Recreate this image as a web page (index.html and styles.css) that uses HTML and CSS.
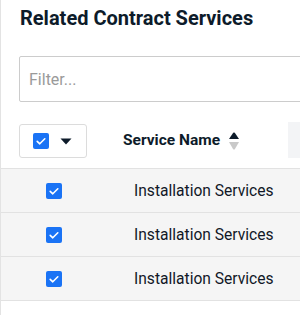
FILE: index.html
```html
<!DOCTYPE html>
<html>
<head>
<meta charset="utf-8">
<link rel="stylesheet" href="styles.css">
</head>
<body>
<div class="panel">
  <h2 class="title">Related Contract Services</h2>
  <div class="filter-wrap">
    <input class="filter" type="text" placeholder="Filter...">
  </div>
  <div class="table">
    <div class="row head">
      <div class="col-sel">
        <div class="sel-box">
          <span class="cb"><svg viewBox="0 0 16 16" width="16" height="16"><path d="M4.2 8.3l2.6 2.5 5-5" fill="none" stroke="#fff" stroke-width="1.6" stroke-linecap="round" stroke-linejoin="round"/></svg></span>
          <svg class="caret" viewBox="0 0 12 7" width="12" height="7"><path d="M0.5 0.5h11L6 6.5z" fill="#0d1b2a"/></svg>
        </div>
      </div>
      <div class="col-name head-name">
        <span>Service Name</span>
        <svg class="sort" viewBox="0 0 10 18" width="10" height="18"><path d="M4.2 0.8Q5 0 5.8 0.8L10 7H0z" fill="#0d1b2a"/><path d="M0 10h10L5.8 17.2Q5 18 4.2 17.2z" fill="#c9c9c9"/></svg>
      </div>
      <div class="col-rest head-rest"></div>
    </div>
    <div class="row">
      <div class="col-sel"><span class="cb"><svg viewBox="0 0 16 16" width="16" height="16"><path d="M4.2 8.3l2.6 2.5 5-5" fill="none" stroke="#fff" stroke-width="1.6" stroke-linecap="round" stroke-linejoin="round"/></svg></span></div>
      <div class="col-name cell">Installation Services</div>
      <div class="col-rest"></div>
    </div>
    <div class="row">
      <div class="col-sel"><span class="cb"><svg viewBox="0 0 16 16" width="16" height="16"><path d="M4.2 8.3l2.6 2.5 5-5" fill="none" stroke="#fff" stroke-width="1.6" stroke-linecap="round" stroke-linejoin="round"/></svg></span></div>
      <div class="col-name cell">Installation Services</div>
      <div class="col-rest"></div>
    </div>
    <div class="row">
      <div class="col-sel"><span class="cb"><svg viewBox="0 0 16 16" width="16" height="16"><path d="M4.2 8.3l2.6 2.5 5-5" fill="none" stroke="#fff" stroke-width="1.6" stroke-linecap="round" stroke-linejoin="round"/></svg></span></div>
      <div class="col-name cell">Installation Services</div>
      <div class="col-rest"></div>
    </div>
  </div>
</div>
</body>
</html>
```
FILE: styles.css
```css
html, body {
  margin: 0;
  padding: 0;
  background: #fff;
  font-family: Roboto, "Liberation Sans", sans-serif;
}
.panel {
  width: 300px;
  height: 315px;
  border-left: 1px solid #e3e3e3;
  box-sizing: border-box;
  overflow: hidden;
}
.title {
  margin: 0;
  padding: 6px 0 0 19px;
  font-size: 20px;
  font-weight: 700;
  line-height: 24px;
  color: #0d1b2a;
  white-space: nowrap;
}
.filter-wrap {
  padding: 26px 0 0 18px;
}
.filter {
  box-sizing: border-box;
  width: calc(100% + 20px);
  height: 46px;
  border: 1px solid #cccccc;
  border-radius: 2px;
  padding: 0 0 0 9px;
  font-family: Roboto, sans-serif;
  font-size: 16px;
  outline: none;
}
.filter::placeholder {
  color: #9a9a9a;
}
.table {
  margin-top: 20px;
  width: 340px;
}
.row {
  display: flex;
  height: 43px;
  background: #f5f5f5;
  border-bottom: 1px solid #e2e2e2;
  align-items: center;
}
.row.head {
  height: 46px;
  background: #fff;
  align-items: flex-start;
}
.col-sel {
  width: 107px;
  flex: none;
  display: flex;
  align-items: center;
  padding-left: 45px;
  box-sizing: border-box;
}
.head .col-sel {
  padding-left: 18px;
  padding-top: 2px;
}
.sel-box {
  box-sizing: border-box;
  width: 68px;
  height: 34px;
  border: 1px solid #dcdcdc;
  border-radius: 3px;
  display: flex;
  align-items: center;
  padding-left: 13px;
  gap: 11px;
}
.cb {
  width: 16px;
  height: 16px;
  border-radius: 2px;
  background: #1a73f5;
  display: block;
}
.cb svg { display: block; }
.caret { display: block; }
.col-name {
  width: 180px;
  flex: none;
  box-sizing: border-box;
}
.head-name {
  display: flex;
  align-items: center;
  padding-left: 15px;
  height: 36px;
  font-size: 15.5px;
  font-weight: 700;
  color: #0d1b2a;
  gap: 9px;
  white-space: nowrap;
}
.sort { display: block; margin-top: 2px; }
.cell {
  padding-left: 26px;
  font-size: 15.6px;
  color: #111827;
  white-space: nowrap;
}
.col-rest {
  flex: 1;
}
.head-rest {
  height: 36px;
  background: #f3f4f6;
}
```
